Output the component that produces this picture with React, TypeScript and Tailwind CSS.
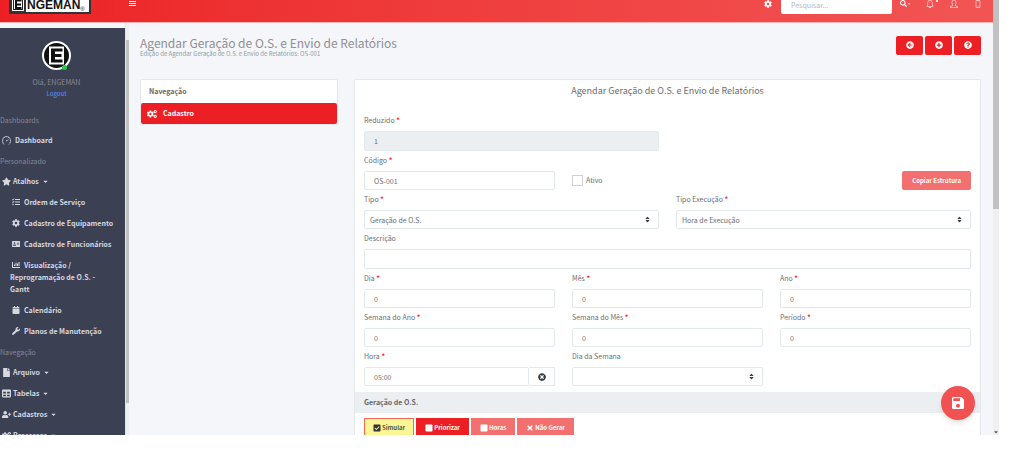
import type { ComponentProps, ReactNode } from 'react';
import {
  FaAddressCard,
  FaArrowCircleLeft,
  FaCalendar,
  FaCaretDown,
  FaChartBar,
  FaCheckSquare,
  FaCog,
  FaCogs,
  FaFile,
  FaPlusCircle,
  FaQuestionCircle,
  FaSearch,
  FaSort,
  FaSquare,
  FaStar,
  FaTable,
  FaTasks,
  FaTimes,
  FaTimesCircle,
  FaUserPlus,
  FaWrench,
} from 'react-icons/fa';
import { MdSave } from 'react-icons/md';
import { SlBell, SlScreenSmartphone, SlSpeedometer, SlUser } from 'react-icons/sl';

const shortcuts = [
  { icon: <FaTasks />, label: 'Ordem de Serviço' },
  { icon: <FaCog />, label: 'Cadastro de Equipamento' },
  { icon: <FaAddressCard />, label: 'Cadastro de Funcionários' },
  { icon: <FaChartBar />, label: 'Visualização / Reprogramação de O.S. - Gantt' },
  { icon: <FaCalendar />, label: 'Calendário' },
  { icon: <FaWrench />, label: 'Planos de Manutenção' },
];

const menus = [
  { icon: <FaFile />, label: 'Arquivo' },
  { icon: <FaTable />, label: 'Tabelas' },
  { icon: <FaUserPlus />, label: 'Cadastros' },
  { icon: <FaCogs />, label: 'Processos' },
];

const control =
  'block w-full rounded-xs border border-[#e1e9eb] bg-white text-[7px] leading-3 text-[#6c6e73] outline-none';

function Label({ id, text, required }: { id: string; text: string; required?: boolean }) {
  return (
    <label htmlFor={id} className="block h-5 text-[7px] leading-[18px] text-[#6c6e73]">
      {text} {required && <span className="font-bold text-[#f22]">*</span>}
    </label>
  );
}

type FieldProps = ComponentProps<'input'> & { id: string; label: string; tall?: boolean };

function Field({ id, label, required, tall, ...rest }: FieldProps) {
  return (
    <div>
      <Label id={id} text={label} required={required} />
      <input id={id} className={`${control} ${tall ? 'h-5' : 'h-[19px]'} px-[9px] read-only:bg-[#ebeff1]`} {...rest} />
    </div>
  );
}

function Select({ id, label, required, value }: { id: string; label: string; required?: boolean; value: string }) {
  return (
    <div>
      <Label id={id} text={label} required={required} />
      <div className="relative">
        <select id={id} className={`${control} h-[19px] appearance-none px-[5px]`}>
          <option>{value}</option>
        </select>
        <FaSort className="pointer-events-none absolute top-[6px] right-2 size-[7px] text-[#343a40]" />
      </div>
    </div>
  );
}

function Logo() {
  return (
    <div className="ml-[9px] flex h-[14px] w-[82px] shrink-0 items-start border-2 border-t-0 border-[#333] bg-white text-[#111]">
      <svg viewBox="0 0 15 12" className="h-3 w-[15px] shrink-0">
        <rect width="15" height="12" fill="#333" />
        <path d="M1 0h12v11H1z" fill="#fff" />
        <path d="M2 0h10v10H2z" fill="#222" />
        <path d="M3 0h8v9H3z" fill="#fff" />
        <path d="M4 0h6.500v1.500H6V3.500h4v2H6v1.500h4.500v2H4z" fill="#111" />
      </svg>
      <span className="pl-px font-[Liberation_Sans] text-[12px] leading-[10px] font-bold">NGEMAN</span>
      <span className="self-end font-[Liberation_Sans] text-[6px] leading-[6px]">®</span>
    </div>
  );
}

function Avatar() {
  return (
    <div className="relative size-[29px]">
      <svg viewBox="0 0 29 29" className="size-full">
        <circle cx="14.500" cy="14.500" r="14.500" fill="#fff" />
        <circle cx="14.500" cy="14.500" r="12.500" fill="#111" />
        <path d="M7 5.500h15v18H7z" fill="#fff" />
        <path d="M9 7.500h11.500v3h-7.500V13h6.500v3H13v2.500h7.500v3H9z" fill="#111" />
      </svg>
      <span className="absolute right-1 bottom-0 size-[5px] rounded-full bg-[#2bc84b]" />
    </div>
  );
}

function SideHeading({ children }: { children: ReactNode }) {
  return <h2 className="h-5 text-[7px] leading-5 font-normal text-[#858894]">{children}</h2>;
}

function Sidebar() {
  return (
    <aside className="flex h-full w-[129px] shrink-0 bg-[#f0f0f0]">
      <nav className="min-w-0 flex-1 overflow-hidden border-t-5 border-[#f5f6fa] bg-[#3c4053] text-[7px] font-semibold text-[#d6d8e0]">
        <div className="flex flex-col items-center pt-[13px] pr-3 pb-[10px]">
          <Avatar />
          <p className="mt-[6px] leading-3 font-normal text-[#858894]">Olá, ENGEMAN</p>
          <a href="#logout" className="text-[6px] leading-3 font-medium text-[#4b87f5]">Logout</a>
        </div>
        <SideHeading>Dashboards</SideHeading>
        <a href="#dashboard" className="flex h-[21px] items-center gap-1 pl-[2px]">
          <SlSpeedometer className="size-[9px]" /> Dashboard
        </a>
        <SideHeading>Personalizado</SideHeading>
        <button className="flex h-[21px] items-center gap-[2px] pl-[2px]">
          <FaStar className="size-[9px]" /> Atalhos <FaCaretDown className="ml-px size-[7px]" />
        </button>
        <ul className="pr-[10px] pl-[10px]">
          {shortcuts.map((item) => (
            <li key={item.label} className="py-1 leading-3">
              <a href="#atalho" className="block pb-px">
                <span className="mr-1 ml-[2px] inline-block align-[-1px] text-[8px]">{item.icon}</span>
                {item.label}
              </a>
            </li>
          ))}
        </ul>
        <SideHeading>Navegação</SideHeading>
        {menus.map((item) => (
          <button key={item.label} className="flex h-[21px] items-center gap-[2px] pl-[2px]">
            <span className="text-[9px]">{item.icon}</span> {item.label} <FaCaretDown className="ml-px size-[7px]" />
          </button>
        ))}
      </nav>
      <div className="flex w-1 flex-col border-l border-[#e4e4e4] pt-[17px] pb-8">
        <div className="flex-1 bg-[#c1c1c1]" />
      </div>
    </aside>
  );
}

function Header() {
  return (
    <header className="flex h-[23px] shrink-0 items-start overflow-hidden border-b border-[#f6b5b5] bg-linear-to-r from-[#ec2024] to-[#f25454] text-white">
      <Logo />
      <button aria-label="Menu" className="mt-px ml-[38px] flex flex-col gap-px">
        <span className="h-px w-[7px] bg-white" />
        <span className="h-px w-[7px] bg-white" />
        <span className="h-px w-[7px] bg-white" />
      </button>
      <button aria-label="Configurações" className="ml-auto">
        <FaCog className="size-2" />
      </button>
      <input
        aria-label="Pesquisar"
        placeholder="Pesquisar..."
        className="ml-[9px] h-[14px] w-[111px] rounded-b-xs bg-white px-[10px] pb-[5px] text-[7px] outline-none placeholder:text-[#b5b8c0]"
      />
      <button aria-label="Buscar" className="ml-2 flex items-center">
        <FaSearch className="size-[7px]" />
        <FaCaretDown className="size-1" />
      </button>
      <button aria-label="Notificações" className="relative ml-[15px]">
        <SlBell className="size-2" />
        <span className="absolute top-0 -right-1 size-[2px] rounded-full bg-white" />
      </button>
      <button aria-label="Usuário" className="ml-4">
        <SlUser className="size-2" />
      </button>
      <button aria-label="Painel" className="mr-[11px] ml-4">
        <SlScreenSmartphone className="size-2" />
      </button>
    </header>
  );
}

function ActionButton({ label, children }: { label: string; children: ReactNode }) {
  return (
    <button aria-label={label} className="flex h-[19px] w-[27px] items-center justify-center rounded-xs bg-[#ec2024] pb-[2px] text-[8px] text-white">
      {children}
    </button>
  );
}

function ScheduleForm() {
  return (
    <form className="min-w-0 flex-1 rounded-xs border border-[#e4e8eb] bg-white">
      <h2 className="mb-[9px] h-[22px] text-center text-[9px] leading-[22px] text-[#6c6e73]">
        Agendar Geração de O.S. e Envio de Relatórios
      </h2>
      <div className="px-[9px]">
        <div className="grid grid-cols-2 gap-x-[17px]">
          <Field id="reduzido" label="Reduzido" required tall defaultValue="1" readOnly />
        </div>
        <div className="grid grid-cols-3 items-end gap-x-[17px]">
          <Field id="codigo" label="Código" required defaultValue="OS-001" />
          <label className="flex h-[19px] items-center gap-[3px] text-[7px] text-[#6c6e73]">
            <input type="checkbox" className="size-[11px] appearance-none border border-[#cfd2d4]" />
            Ativo
          </label>
          <button type="button" className="h-[19px] justify-self-end rounded-xs bg-[#f37070] px-[10px] text-[6px] font-bold text-white">
            Copiar Estrutura
          </button>
        </div>
        <div className="grid grid-cols-2 gap-x-[17px]">
          <Select id="tipo" label="Tipo" required value="Geração de O.S." />
          <Select id="execucao" label="Tipo Execução" required value="Hora de Execução" />
        </div>
        <Field id="descricao" label="Descrição" tall />
        <div className="grid grid-cols-3 gap-x-[17px]">
          <Field id="dia" label="Dia" required defaultValue="0" />
          <Field id="mes" label="Mês" required defaultValue="0" />
          <Field id="ano" label="Ano" required defaultValue="0" />
          <Field id="semana-ano" label="Semana do Ano" required defaultValue="0" />
          <Field id="semana-mes" label="Semana do Mês" required defaultValue="0" />
          <Field id="periodo" label="Período" required defaultValue="0" />
          <div>
            <Label id="hora" text="Hora" required />
            <div className="flex">
              <input id="hora" className={`${control} h-[19px] min-w-0 flex-1 px-[9px]`} defaultValue="05:00" />
              <button type="button" aria-label="Limpar hora" className="flex h-[19px] w-[26px] items-center justify-center border border-l-0 border-[#e1e9eb]">
                <FaTimesCircle className="size-2 text-[#343a40]" />
              </button>
            </div>
          </div>
          <Select id="dia-semana" label="Dia da Semana" value="" />
        </div>
      </div>
      <h3 className="mt-[6px] h-[21px] bg-[#ebeff1] px-[9px] text-[7px] leading-[21px] font-semibold text-[#66686d]">
        Geração de O.S.
      </h3>
      <div className="flex gap-[2px] px-[9px] pt-[5px] text-[6px] font-bold text-white">
        <button type="button" className="flex h-[19px] items-center gap-px border border-[#f26a4f] bg-[#faf595] px-2 text-[#55563f]">
          <FaCheckSquare className="size-2 text-[#333]" /> Simular
        </button>
        <button type="button" className="flex h-[19px] items-center gap-px bg-[#ec2024] px-[9px]">
          <FaSquare className="size-2" /> Priorizar
        </button>
        <button type="button" className="flex h-[19px] items-center gap-px bg-[#f37070] px-[9px]">
          <FaSquare className="size-2" /> Horas
        </button>
        <button type="button" className="flex h-[19px] items-center gap-px bg-[#f37070] px-[9px]">
          <FaTimes className="size-2" /> Não Gerar
        </button>
      </div>
    </form>
  );
}

export default function App() {
  return (
    <div className="h-screen bg-white pr-[25px] pb-4 font-['Noto_Sans_CJK_SC',sans-serif]">
      <div className="relative flex h-full overflow-hidden bg-[#f5f6fa]">
        <div className="flex min-w-0 flex-1 flex-col">
          <Header />
          <div className="flex min-h-0 flex-1">
            <Sidebar />
            <main className="min-w-0 flex-1 overflow-hidden pr-3 pl-[11px]">
              <div className="flex h-14 items-start justify-between pt-[13px]">
                <div>
                  <h1 className="text-[12px] leading-[13px] text-[#8e9095]">
                    Agendar Geração de O.S. e Envio de Relatórios
                  </h1>
                  <p className="text-[6px] leading-[9px] text-[#8f9ca0]">
                    Edição de Agendar Geração de O.S. e Envio de Relatórios: OS-001
                  </p>
                </div>
                <div className="flex gap-[2px]">
                  <ActionButton label="Voltar"><FaArrowCircleLeft /></ActionButton>
                  <ActionButton label="Adicionar"><FaPlusCircle /></ActionButton>
                  <ActionButton label="Ajuda"><FaQuestionCircle /></ActionButton>
                </div>
              </div>
              <div className="flex items-start gap-4">
                <section className="w-[198px] shrink-0 rounded-xs border border-[#e4e8eb] bg-white">
                  <h2 className="h-[23px] px-2 text-[7px] leading-[23px] font-semibold text-[#66686d]">Navegação</h2>
                  <a href="#cadastro" className="flex h-[21px] items-center gap-[6px] rounded-xs bg-[#ec2024] px-[6px] text-[7px] font-semibold text-white">
                    <FaCogs className="size-[10px]" /> Cadastro
                  </a>
                </section>
                <ScheduleForm />
              </div>
            </main>
          </div>
        </div>
        <div className="flex w-[6px] flex-col items-center bg-[#f0f0f0]">
          <div className="h-[48%] w-full bg-[#c1c1c1]" />
          <FaCaretDown className="mt-auto size-[6px] text-[#555]" />
        </div>
        <button aria-label="Salvar" className="absolute right-6 bottom-[15px] flex size-[34px] items-center justify-center rounded-full bg-[#f25151] text-white shadow-md">
          <MdSave className="size-4" />
        </button>
      </div>
    </div>
  );
}
